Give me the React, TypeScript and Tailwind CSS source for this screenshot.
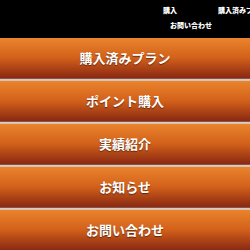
import React from "react";

const items = ["購入済みプラン", "ポイント購入", "実績紹介", "お知らせ", "お問い合わせ"];

export default function App() {
  return (
    <div className="w-[250px] h-[250px] overflow-hidden bg-black" style={{ fontFamily: '"Noto Sans CJK JP", "Noto Sans", sans-serif' }}>
      <div className="h-[38px] bg-black flex flex-col pt-[6px] text-white font-black text-[7px] leading-[9px] whitespace-nowrap overflow-hidden">
        <div className="flex">
          <span className="ml-[163px] w-[55px] shrink-0">購入</span>
          <span className="shrink-0">購入済みプラン</span>
        </div>
        <div className="flex mt-[6px]">
          <span className="ml-[170px] shrink-0">お問い合わせ</span>
        </div>
      </div>
      <div className="flex flex-col">
        {items.map((t, i) => (
          <div key={t} className="flex flex-col">
            {i > 0 && <div className="h-[3px] bg-gradient-to-b from-[#5c1c0c] via-[#dccabf] to-[#d2bdb0]" />}
            <div className="h-[40px] flex items-center justify-center bg-gradient-to-b from-[#ea842c] via-[#d2601a] to-[#8a2812] text-white font-bold text-[13px] [text-shadow:0_1px_1px_rgba(0,0,0,0.5)]">
              {t}
            </div>
          </div>
        ))}
      </div>
    </div>
  );
}
